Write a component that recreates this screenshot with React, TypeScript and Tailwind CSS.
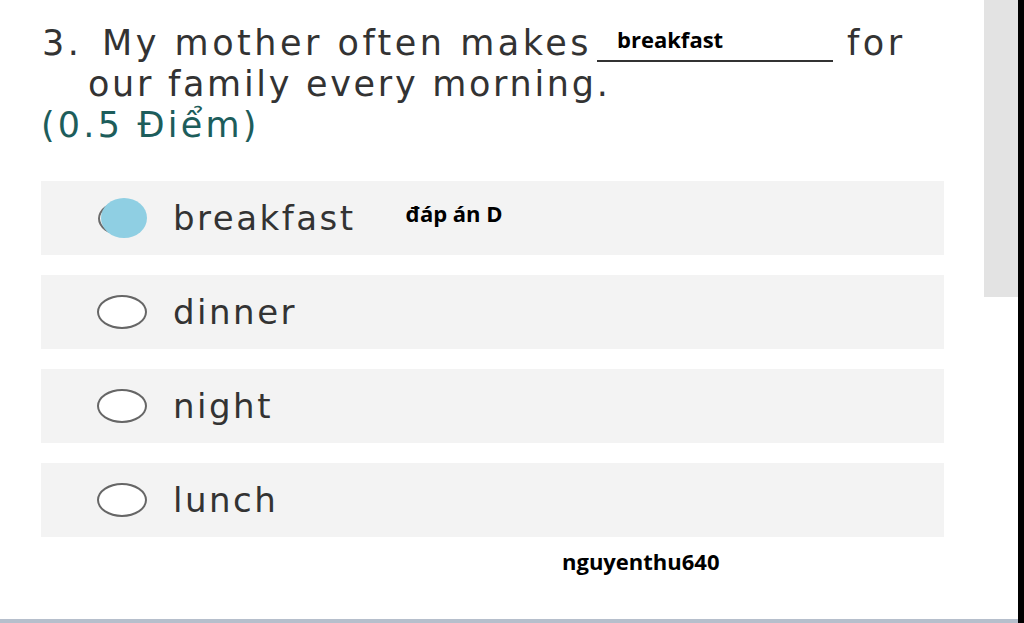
import React from "react";

const main = { fontFamily: '"DejaVu Sans", "Open Sans", sans-serif' };
const bold = { fontFamily: '"Open Sans", "Noto Sans", sans-serif' };

function Radio({ filled }: { filled?: boolean }) {
  if (filled) {
    return (
      <div className="relative w-[50px] h-[40px] shrink-0">
        <div className="absolute left-[1px] top-[4px] w-[44px] h-[33px] rounded-[50%] border-2 border-[#6b6b6b]" />
        <div className="absolute left-[4px] top-0 w-[46px] h-[40px] rounded-[50%] bg-[#8fcfe3]" />
      </div>
    );
  }
  return <div className="w-[50px] h-[34px] shrink-0 rounded-[50%] border-2 border-[#666] bg-white" />;
}

function Option({ label, filled, extra }: { label: string; filled?: boolean; extra?: React.ReactNode }) {
  return (
    <div className="h-[74px] w-[903px] bg-[#f3f3f3] flex items-center pl-[56px]">
      <Radio filled={filled} />
      <span className="ml-[26px] text-[34px] tracking-[2.5px] text-[#333] leading-none" style={main}>
        {label}
      </span>
      {extra}
    </div>
  );
}

export default function App() {
  return (
    <div className="relative w-[1024px] h-[623px] bg-white overflow-hidden flex">
      <div className="w-[984px] h-full pl-[41px] pt-[23px]">
        <div className="text-[#333] text-[35px] leading-[41px]" style={main}>
          <div className="flex items-baseline whitespace-nowrap tracking-[3.5px]">
            <span className="w-[61px] pl-[1px]">3.</span>
            <span>My mother often makes</span>
            <span className="relative ml-[5px] inline-block w-[236px]">
              <span className="absolute left-0 right-0 bottom-[2px] border-b-2 border-[#333]" />
              <span
                className="absolute left-[20px] bottom-[14px] text-[22px] font-bold tracking-normal text-black leading-none"
                style={bold}
              >
                breakfast
              </span>
              &nbsp;
            </span>
            <span className="ml-[14px]">for</span>
          </div>
          <div className="pl-[47px] whitespace-nowrap tracking-[2.7px]">our family every morning.</div>
          <div className="text-[#1d5d5b] tracking-[3.2px]">(0.5 Điểm)</div>
        </div>

        <div className="mt-[35px] flex flex-col gap-[20px]">
          <Option
            label="breakfast"
            filled
            extra={
              <span className="ml-[50px] -mt-[10px] text-[22px] font-bold text-black leading-none" style={bold}>
                đáp án D
              </span>
            }
          />
          <Option label="dinner" />
          <Option label="night" />
          <Option label="lunch" />
        </div>

        <div className="mt-[8px] ml-[521px] text-[22px] font-bold text-black" style={bold}>
          nguyenthu640
        </div>
      </div>
      <div className="w-[34px] h-full flex flex-col">
        <div className="h-[297px] bg-[#e3e3e3]" />
      </div>
      <div className="w-[6px] h-full bg-black" />
      <div className="absolute left-0 bottom-0 w-[1018px] h-[4px] bg-[#b6bfcc]" />
    </div>
  );
}
